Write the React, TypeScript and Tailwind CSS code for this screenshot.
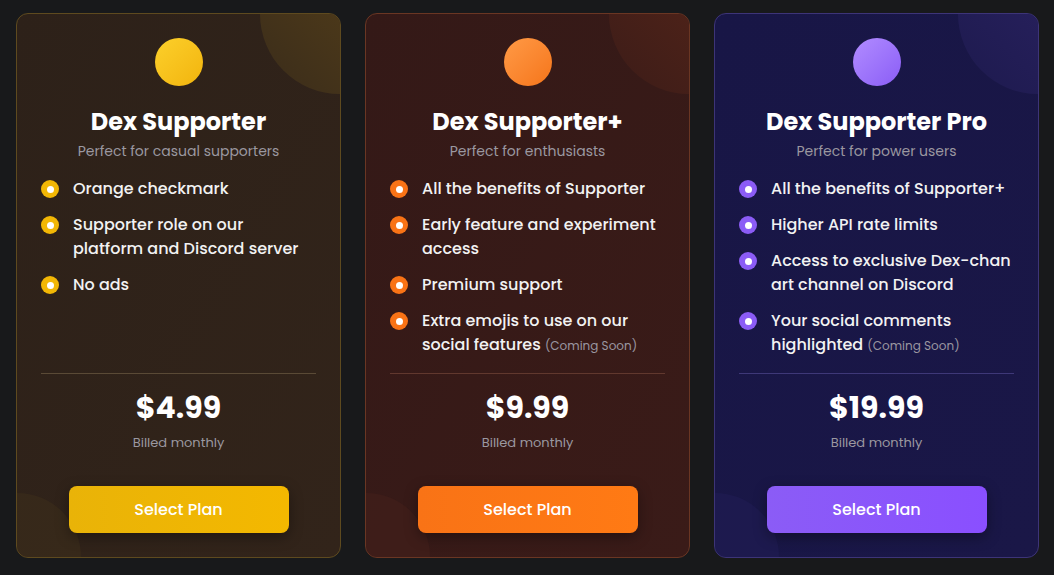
import React from 'react';

interface Plan {
  name: string;
  tagline: string;
  features: React.ReactNode[];
  price: string;
  card: string;
  orb: string;
  glow: string;
  glowSmall: string;
  bullet: string;
  divider: string;
  button: string;
}

const Soon = () => <span className="text-[12px] leading-none font-normal text-[#9a96a0]">(Coming Soon)</span>;

const plans: Plan[] = [
  {
    name: 'Dex Supporter',
    tagline: 'Perfect for casual supporters',
    features: ['Orange checkmark', 'Supporter role on our platform and Discord server', 'No ads'],
    price: '$4.99',
    card: 'bg-gradient-to-br from-[#2d2119] to-[#32241a] border-[#5e4a1f]',
    orb: 'bg-gradient-to-br from-[#fcd02a] to-[#f2b40a]',
    glow: 'bg-gradient-to-bl from-[#5c4417] to-[#3a2c1a]',
    glowSmall: 'bg-[#3c2d1a]',
    bullet: 'bg-[#f2b705]',
    divider: 'border-[#5a4a36]',
    button: 'bg-gradient-to-r from-[#e9b308] to-[#f4b800]',
  },
  {
    name: 'Dex Supporter+',
    tagline: 'Perfect for enthusiasts',
    features: [
      'All the benefits of Supporter',
      'Early feature and experiment access',
      'Premium support',
      <>Extra emojis to use on our social features <Soon /></>,
    ],
    price: '$9.99',
    card: 'bg-gradient-to-br from-[#341917] to-[#3a1b18] border-[#6a3623]',
    orb: 'bg-gradient-to-br from-[#ff9a45] to-[#f57517]',
    glow: 'bg-gradient-to-bl from-[#5c2718] to-[#3c1c18]',
    glowSmall: 'bg-[#43201a]',
    bullet: 'bg-[#f97316]',
    divider: 'border-[#61382e]',
    button: 'bg-gradient-to-r from-[#f97316] to-[#ff7a14]',
  },
  {
    name: 'Dex Supporter Pro',
    tagline: 'Perfect for power users',
    features: [
      'All the benefits of Supporter+',
      'Higher API rate limits',
      'Access to exclusive Dex-chan art channel on Discord',
      <>Your social comments highlighted <Soon /></>,
    ],
    price: '$19.99',
    card: 'bg-gradient-to-br from-[#181646] to-[#1a1747] border-[#3d3478]',
    orb: 'bg-gradient-to-br from-[#b28cff] to-[#8b5cf6]',
    glow: 'bg-gradient-to-bl from-[#2e2466] to-[#1d1a4e]',
    glowSmall: 'bg-[#201c54]',
    bullet: 'bg-[#8b5cf6]',
    divider: 'border-[#3e3878]',
    button: 'bg-gradient-to-r from-[#8b5cf6] to-[#8a4fff]',
  },
];

const PlanCard = ({ plan }: { plan: Plan }) => (
  <div className={`relative flex flex-1 flex-col overflow-hidden rounded-xl border px-6 pt-6 pb-6 ${plan.card}`}>
    <div className={`absolute -top-20 -right-20 h-40 w-40 rounded-full ${plan.glow}`} />
    <div className={`absolute -bottom-16 -left-16 h-32 w-32 rounded-full opacity-60 ${plan.glowSmall}`} />

    <div className="relative flex flex-1 flex-col">
      <div className={`mx-auto h-12 w-12 rounded-full ${plan.orb}`} />
      <h2 className="mt-5 text-center text-[24px] leading-8 font-bold text-white">{plan.name}</h2>
      <p className="mt-[3px] text-center text-[14px] leading-5 text-[#9b98a0]">{plan.tagline}</p>

      <ul className="mt-4 flex flex-1 flex-col gap-3">
        {plan.features.map((f, i) => (
          <li key={i} className="flex items-start gap-[14px] text-[16px] leading-6 font-medium text-[#f2f2f2]">
            <span className={`mt-[3px] flex h-[18px] w-[18px] shrink-0 items-center justify-center rounded-full ${plan.bullet}`}>
              <span className="h-[7px] w-[7px] rounded-full bg-white" />
            </span>
            <span>{f}</span>
          </li>
        ))}
      </ul>

      <div className={`mt-4 border-t pt-4 text-center ${plan.divider}`}>
        <div className="text-[30px] leading-9 font-bold text-white">{plan.price}</div>
        <div className="mt-[7px] text-[13px] leading-5 text-[#9b98a0]">Billed monthly</div>
      </div>

      <button
        className={`mx-auto mt-[33px] h-[47px] w-[220px] shrink-0 rounded-lg text-[16px] font-medium text-white shadow-[0_4px_14px_rgba(0,0,0,0.35)] ${plan.button}`}
      >
        Select Plan
      </button>
    </div>
  </div>
);

export default function App() {
  return (
    <div
      className="flex h-[575px] w-full gap-6 bg-[#18191b] pt-[13px] pr-[15px] pb-[17px] pl-4"
      style={{ fontFamily: 'Poppins, Inter, "Noto Sans", sans-serif' }}
    >
      {plans.map((p) => (
        <PlanCard key={p.name} plan={p} />
      ))}
    </div>
  );
}
